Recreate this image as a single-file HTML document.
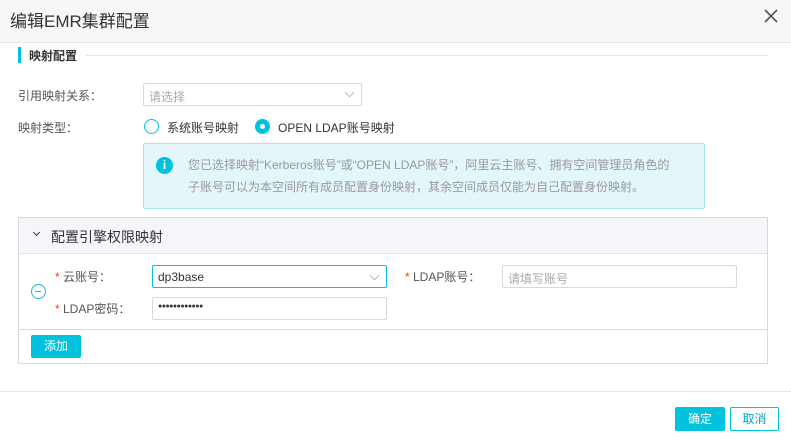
<!DOCTYPE html>
<html><head><meta charset="utf-8"><style>
*{margin:0;padding:0;box-sizing:border-box}
body{width:791px;height:443px;background:#fff;font-family:"Liberation Sans","Noto Sans CJK SC",sans-serif;position:relative;overflow:hidden;color:#333;font-size:12px}
.a{position:absolute;white-space:nowrap}
.inp{position:absolute;border:1px solid #d7d8e0;border-radius:2px;background:#fff}
.lbl{color:#555;font-size:12px}
.star{color:#e8432e}
.chev{position:absolute;right:8px;top:6px;width:7px;height:7px;border-right:1px solid #b8bbc6;border-bottom:1px solid #b8bbc6;transform:rotate(45deg)}
</style></head><body>
<div class="a" style="left:0;top:0;width:791px;height:43px;background:#f7f7f8;border-bottom:1px solid #e6e6e9"></div>
<div class="a" style="left:10px;top:7px;font-size:17px;color:#333">编辑EMR集群配置</div>
<svg class="a" style="left:764px;top:9px" width="14" height="14"><path d="M1 1L13 13M13 1L1 13" stroke="#555" stroke-width="1.6"/></svg>
<div class="a" style="left:18px;top:47px;width:3px;height:16px;background:#00c1de"></div>
<div class="a" style="left:29px;top:47px;font-size:12px;font-weight:bold;color:#333">映射配置</div>
<div class="a" style="left:86px;top:55px;width:682px;height:1px;background:#e3e4ea"></div>
<div class="a lbl" style="left:18px;top:87px">引用映射关系：</div>
<div class="inp" style="left:143px;top:83px;width:219px;height:23px"><span class="a" style="left:5px;top:4px;color:#aaa">请选择</span><div class="chev" style="top:5px"></div></div>
<div class="a lbl" style="left:18px;top:119px">映射类型：</div>
<div class="a" style="left:144px;top:119px;width:15px;height:15px;border:1px solid #00c1de;border-radius:50%"></div>
<div class="a" style="left:167px;top:119px;color:#333">系统账号映射</div>
<div class="a" style="left:255px;top:119px;width:15px;height:15px;background:#00c1de;border-radius:50%"><div class="a" style="left:5px;top:5px;width:5px;height:5px;background:#fff;border-radius:50%"></div></div>
<div class="a" style="left:278px;top:119px;color:#333">OPEN LDAP账号映射</div>
<div class="a" style="left:143px;top:143px;width:562px;height:66px;background:#e3f6fa;border:1px solid #a8e4ee;border-radius:2px"></div>
<div class="a" style="left:156px;top:157px;width:17px;height:17px;background:#00c1de;border-radius:50%;color:#fff;font-weight:bold;font-size:12px;text-align:center;line-height:17px">i</div>
<div class="a" style="left:188px;top:154px;color:#999;line-height:22px">您已选择映射“Kerberos账号”或“OPEN LDAP账号”，阿里云主账号、拥有空间管理员角色的<br>子账号可以为本空间所有成员配置身份映射，其余空间成员仅能为自己配置身份映射。</div>
<div class="a" style="left:18px;top:217px;width:750px;height:147px;border:1px solid #d7d8e0"></div>
<div class="a" style="left:19px;top:218px;width:748px;height:36px;background:#f5f6fa;border-bottom:1px solid #c9eef4"></div>
<div class="a" style="left:34px;top:230px;width:5px;height:5px;border-right:1.5px solid #333;border-bottom:1.5px solid #333;transform:rotate(45deg)"></div>
<div class="a" style="left:51px;top:227px;font-size:14px;color:#333">配置引擎权限映射</div>
<div class="a" style="left:31px;top:284px;width:15px;height:15px;border:1.5px solid #00c1de;border-radius:50%"><div class="a" style="left:3px;top:5.5px;width:6px;height:1.5px;background:#00c1de"></div></div>
<div class="a lbl" style="left:55px;top:268px"><span class="star">*</span> 云账号：</div>
<div class="inp" style="left:152px;top:265px;width:235px;height:23px;border-color:#00c1de"><span class="a" style="left:5px;top:4px;color:#333">dp3base</span><div class="chev"></div></div>
<div class="a lbl" style="left:55px;top:300px"><span class="star">*</span> LDAP密码：</div>
<div class="inp" style="left:152px;top:297px;width:235px;height:23px"><span class="a" style="left:5px;top:5px;color:#333;font-size:7px;letter-spacing:-0.5px">●●●●●●●●●●●●</span></div>
<div class="a lbl" style="left:405px;top:268px"><span class="star">*</span> LDAP账号：</div>
<div class="inp" style="left:502px;top:265px;width:235px;height:23px"><span class="a" style="left:5px;top:4px;color:#aaa">请填写账号</span></div>
<div class="a" style="left:19px;top:329px;width:748px;height:1px;background:#d7d8e0"></div>
<div class="a" style="left:31px;top:335px;width:50px;height:23px;background:#00c1de;border-radius:2px;color:#fff;text-align:center;line-height:23px">添加</div>
<div class="a" style="left:0;top:391px;width:791px;height:1px;background:#e6e6e9"></div>
<div class="a" style="left:675px;top:407px;width:50px;height:24px;background:#00c1de;border-radius:2px;color:#fff;text-align:center;line-height:24px">确定</div>
<div class="a" style="left:730px;top:407px;width:49px;height:24px;border:1px solid #00c1de;border-radius:2px;color:#00a6c4;text-align:center;line-height:22px">取消</div>
</body></html>
